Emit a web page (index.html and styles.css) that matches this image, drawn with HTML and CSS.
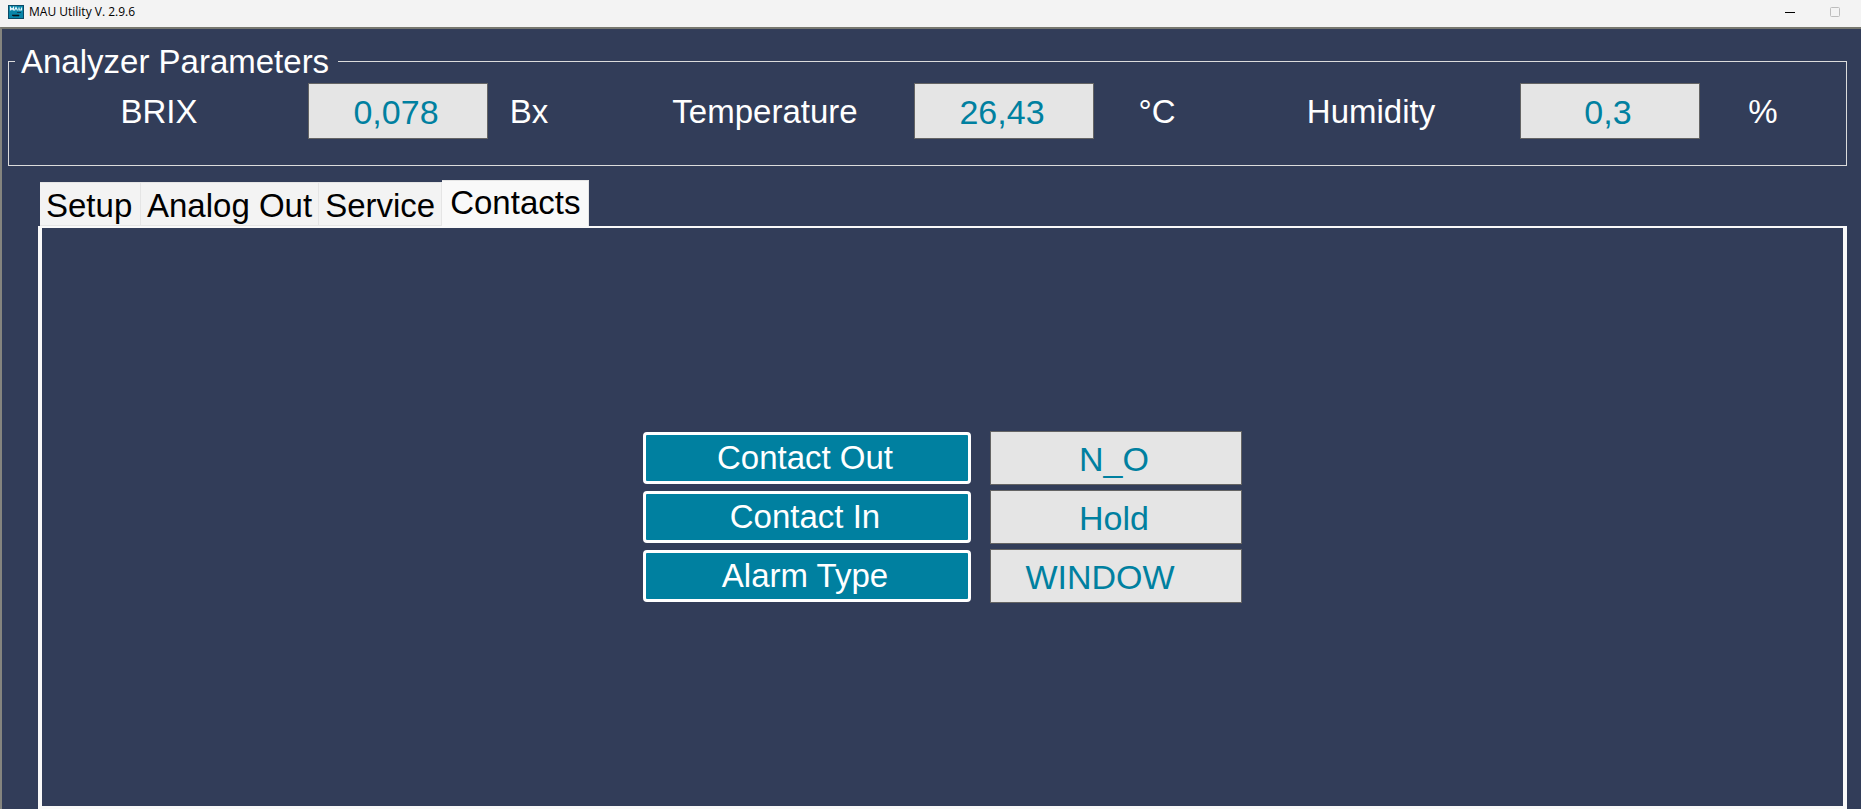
FILE: index.html
```html
<!DOCTYPE html>
<html lang="en">
<head>
<meta charset="utf-8">
<title>MAU Utility V. 2.9.6</title>
<link rel="stylesheet" href="styles.css">
</head>
<body>
<header class="titlebar">
  <svg class="app-icon" viewBox="0 0 16 14" aria-hidden="true">
    <rect width="16" height="14" fill="#0b4a66"/>
    <rect x="1" y="1" width="14" height="12" fill="#0785a8"/>
    <path d="M2.5 5.500V2.500L4 4.500 5.500 2.500V5.500M6.500 5.500L8 2.500 9.500 5.500M11 2.500V5H13.500V2.500" fill="none" stroke="#e8f6fa" stroke-width="1.200"/>
    <path d="M9 7.500h4" stroke="#0b4058" stroke-width="1"/>
    <path d="M4 10h7v1H5z" fill="#06141c" stroke="#06141c" stroke-width=".6"/>
  </svg>
  <h1 class="title">MAU Utility V. 2.9.6</h1>
  <div class="window-controls">
    <button class="window-button" type="button" aria-label="Minimize">
      <svg width="10" height="10" viewBox="0 0 10 10"><path d="M0 5.500h10" stroke="#000"/></svg>
    </button>
    <button class="window-button" type="button" aria-label="Maximize" disabled>
      <svg width="10" height="10" viewBox="0 0 10 10"><rect x=".5" y=".5" width="9" height="9" rx="1" fill="none" stroke="#bdbdbd"/></svg>
    </button>
  </div>
</header>
<main class="window">
  <fieldset class="parameters">
    <legend class="legend">Analyzer Parameters</legend>
    <div class="readings">
      <label class="name" for="brix">BRIX</label>
      <input class="field" id="brix" value="0,078" readonly>
      <span class="unit unit-near">Bx</span>
      <label class="name" for="temperature">Temperature</label>
      <input class="field" id="temperature" value="26,43" readonly>
      <span class="unit">°C</span>
      <label class="name" for="humidity">Humidity</label>
      <input class="field" id="humidity" value="0,3" readonly>
      <span class="unit">%</span>
    </div>
  </fieldset>
  <div class="tabs" role="tablist">
    <button class="tab" type="button" role="tab">Setup</button>
    <button class="tab" type="button" role="tab">Analog Out</button>
    <button class="tab" type="button" role="tab">Service</button>
    <button class="tab tab-active" type="button" role="tab" aria-selected="true">Contacts</button>
  </div>
  <section class="panel" role="tabpanel">
    <div class="settings">
      <button class="action" type="button">Contact Out</button>
      <input class="field" aria-label="Contact Out" value="N_O" readonly>
      <button class="action" type="button">Contact In</button>
      <input class="field" aria-label="Contact In" value="Hold" readonly>
      <button class="action" type="button">Alarm Type</button>
      <input class="field field-wide" aria-label="Alarm Type" value="WINDOW" readonly>
    </div>
  </section>
</main>
</body>
</html>
```
FILE: styles.css
```css
* {
  box-sizing: border-box;
}

body {
  margin: 0;
  min-height: 100vh;
  display: flex;
  flex-direction: column;
  background: #323d59;
  color: #fff;
  font: 33px/38px "Liberation Sans", Arial, sans-serif;
}

button,
input {
  margin: 0;
  font: inherit;
  border-radius: 0;
}

.titlebar {
  display: flex;
  align-items: center;
  height: 27px;
  padding: 0 16px 4px 8px;
  background: #f3f3f3;
  color: #000;
}

.app-icon {
  width: 16px;
  height: 14px;
}

.title {
  margin: 0 0 0 5px;
  font: 12px/16px "Open Sans", "Noto Sans", sans-serif;
}

.window-controls {
  display: flex;
  gap: 25px;
  margin-left: auto;
}

.window-button {
  display: flex;
  padding: 5px;
  border: 0;
  background: none;
}

.window {
  flex: 1;
  display: flex;
  flex-direction: column;
  padding: 14px 14px 0 6px;
  border-top: 2px solid #77786f;
  border-left: 2px solid #85857f;
}

.parameters {
  min-width: 0;
  margin: 0;
  padding: 3px 18px 26px 1px;
  border: 1px solid #dcdcdc;
}

.legend {
  margin-left: 5px;
  padding: 1px 9px 0 6px;
  line-height: 36px;
}

.readings {
  display: grid;
  grid-template-columns: repeat(3, 298fr 180fr 128fr);
  align-items: center;
}

.name,
.unit {
  padding-top: 2px;
  text-align: center;
}

.unit {
  padding-right: 2px;
}

.unit-near {
  padding-right: 46px;
}

.field {
  width: 100%;
  min-width: 0;
  height: 56px;
  padding: 2px 4px 0 0;
  border: 1px solid #646464;
  background: #e5e5e5;
  color: #0080a0;
  font-size: 34px;
  text-align: center;
}

.tabs {
  display: flex;
  align-items: flex-end;
  margin: 14px 0 0 32px;
}

.tab {
  min-width: 101px;
  height: 44px;
  padding: 4px 6px 2px;
  border: solid #e5e5e5;
  border-width: 1px 1px 1px 0;
  background: #f3f3f3;
  color: #000;
  line-height: 38px;
  text-align: left;
  white-space: nowrap;
}

.tab-active {
  height: 46px;
  padding: 3px 8px 5px;
  border-bottom: 0;
  background: #f9f9f9;
}

.panel {
  flex: 1;
  display: grid;
  place-content: center;
  margin-left: 30px;
  border: solid #f9f9f9;
  border-width: 2px 4px 3px;
}

.settings {
  display: grid;
  grid-template-columns: 328px 252px;
  gap: 5px 19px;
  align-items: center;
}

.settings .field {
  height: 54px;
}

.settings .field-wide {
  padding-right: 32px;
}

.action {
  height: 52px;
  padding: 0 4px 0 0;
  border: 3px solid #fff;
  border-radius: 4px;
  background: #0080a0;
  color: #fff;
}
```
